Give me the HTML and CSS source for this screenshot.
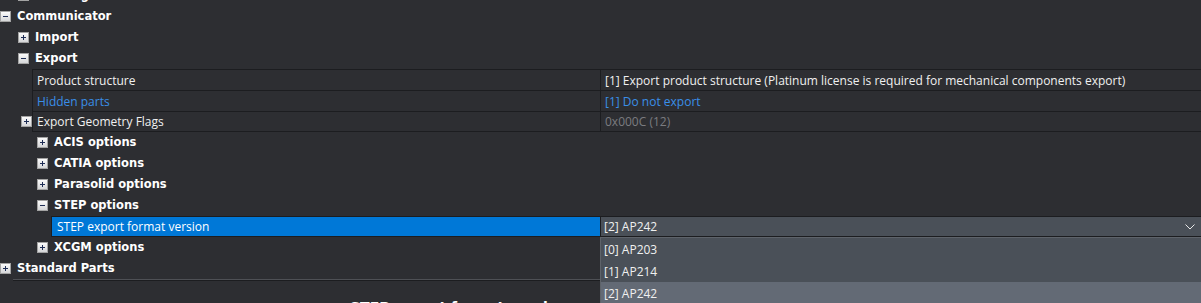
FILE: index.html
```html
<!DOCTYPE html>
<html>
<head>
<meta charset="utf-8">
<link rel="stylesheet" href="styles.css">
</head>
<body>
<div class="pane">
  <div class="tree">
    <div class="cat l1"><span class="exp"><svg viewBox="0 0 9 9" width="9" height="9"><path d="M2 4.5h5M4.5 2v5" class="sym"/></svg></span><span class="cat-label">Drawing</span></div>
    <div class="cat l0"><span class="exp"><svg viewBox="0 0 9 9" width="9" height="9"><path d="M2 4.5h5" class="sym"/></svg></span><span class="cat-label">Communicator</span></div>
    <div class="cat l1"><span class="exp"><svg viewBox="0 0 9 9" width="9" height="9"><path d="M2 4.5h5M4.5 2v5" class="sym"/></svg></span><span class="cat-label">Import</span></div>
    <div class="cat l1"><span class="exp"><svg viewBox="0 0 9 9" width="9" height="9"><path d="M2 4.5h5" class="sym"/></svg></span><span class="cat-label">Export</span></div>

    <div class="prow">
      <div class="gutter g32"></div>
      <div class="cells">
        <div class="pname">Product structure</div>
        <div class="pval">[1] Export product structure (Platinum license is required for mechanical components export)</div>
      </div>
    </div>
    <div class="prow">
      <div class="gutter g32"></div>
      <div class="cells">
        <div class="pname link">Hidden parts</div>
        <div class="pval link">[1] Do not export</div>
      </div>
    </div>
    <div class="prow">
      <div class="gutter g32"><span class="exp"><svg viewBox="0 0 9 9" width="9" height="9"><path d="M2 4.5h5M4.5 2v5" class="sym"/></svg></span></div>
      <div class="cells last">
        <div class="pname">Export Geometry Flags</div>
        <div class="pval dim">0x000C (12)</div>
      </div>
    </div>

    <div class="cat l2"><span class="exp"><svg viewBox="0 0 9 9" width="9" height="9"><path d="M2 4.5h5M4.5 2v5" class="sym"/></svg></span><span class="cat-label">ACIS options</span></div>
    <div class="cat l2"><span class="exp"><svg viewBox="0 0 9 9" width="9" height="9"><path d="M2 4.5h5M4.5 2v5" class="sym"/></svg></span><span class="cat-label">CATIA options</span></div>
    <div class="cat l2"><span class="exp"><svg viewBox="0 0 9 9" width="9" height="9"><path d="M2 4.5h5M4.5 2v5" class="sym"/></svg></span><span class="cat-label">Parasolid options</span></div>
    <div class="cat l2"><span class="exp"><svg viewBox="0 0 9 9" width="9" height="9"><path d="M2 4.5h5" class="sym"/></svg></span><span class="cat-label">STEP options</span></div>

    <div class="prow">
      <div class="gutter g51"></div>
      <div class="cells last">
        <div class="pname sel">STEP export format version</div>
        <div class="pval combo">
          <span class="combo-text">[2] AP242</span>
          <svg class="chev" viewBox="0 0 10 6" width="10" height="6"><path d="M0.5 0.5L5 5L9.5 0.5" fill="none" stroke="#e8e8e8" stroke-width="1"/></svg>
          <div class="dropdown">
            <div class="opt">[0] AP203</div>
            <div class="opt">[1] AP214</div>
            <div class="opt cur">[2] AP242</div>
          </div>
        </div>
      </div>
    </div>

    <div class="cat l2"><span class="exp"><svg viewBox="0 0 9 9" width="9" height="9"><path d="M2 4.5h5M4.5 2v5" class="sym"/></svg></span><span class="cat-label">XCGM options</span></div>
    <div class="cat l0"><span class="exp"><svg viewBox="0 0 9 9" width="9" height="9"><path d="M2 4.5h5M4.5 2v5" class="sym"/></svg></span><span class="cat-label">Standard Parts</span></div>
  </div>
  <div class="tree-end"></div>
  <div class="desc">STEP export format version</div>
</div>
</body>
</html>
```

FILE: styles.css
```css
html, body {
  margin: 0;
  padding: 0;
  background: #2d2e32;
  height: 303px;
  overflow: hidden;
}

.pane {
  width: 1201px;
  height: 303px;
  overflow: hidden;
  font-family: "Open Sans", "Noto Sans", sans-serif;
  font-size: 12px;
  color: #f0f0f0;
}

.tree {
  margin-top: -15px;
}

.cat {
  height: 21px;
  display: flex;
  align-items: center;
  font-family: "DejaVu Sans", sans-serif;
  font-weight: bold;
  font-size: 11.5px;
  color: #ffffff;
}

.cat.l0 { padding-left: 0; }
.cat.l1 { padding-left: 18px; }
.cat.l2 { padding-left: 37px; }

.exp {
  box-sizing: border-box;
  width: 11px;
  height: 11px;
  border: 1px solid #a3a3a3;
  background: linear-gradient(#fbfbfb, #d5d6d8);
  display: flex;
  flex: none;
}

.exp svg { display: block; }

.sym {
  stroke: #1e2d55;
  stroke-width: 1;
  fill: none;
  shape-rendering: crispEdges;
}

.cat-label {
  margin-left: 6px;
  line-height: 21px;
}

.prow {
  display: flex;
  height: 21px;
}

.gutter {
  flex: none;
  display: flex;
  align-items: center;
  box-sizing: border-box;
}

.g32 { width: 32px; padding-left: 21px; }
.g51 { width: 51px; }

.cells {
  flex: 1;
  display: flex;
  box-sizing: border-box;
  border-top: 1px solid #1c1d20;
  border-left: 1px solid #1c1d20;
}

.cells.last {
  border-bottom: 1px solid #1c1d20;
}

.pname {
  flex: 1;
  box-sizing: border-box;
  padding-left: 4px;
  display: flex;
  align-items: center;
  white-space: nowrap;
}

.pval {
  width: 601px;
  flex: none;
  box-sizing: border-box;
  border-left: 1px solid #1c1d20;
  padding-left: 4px;
  display: flex;
  align-items: center;
  white-space: nowrap;
}

.link { color: #3a8ee8; }
.dim { color: #7b7c80; }

.pname.sel {
  background: #0078d7;
  color: #ffffff;
  padding-left: 5px;
}

.combo {
  position: relative;
  background: #4a5058;
  padding-left: 3px;
  padding-right: 6px;
  justify-content: space-between;
}

.chev { display: block; }

.dropdown {
  position: absolute;
  left: -1px;
  right: 0;
  top: calc(100% + 1px);
  z-index: 5;
  background: #4a5058;
  border-top: 1px solid #5e636a;
  border-left: 1px solid #5e636a;
}

.opt {
  height: 22px;
  display: flex;
  align-items: center;
  padding-left: 3px;
  color: #f0f0f0;
}

.opt.cur { background: #636a75; }

.tree-end {
  margin-left: 13px;
  border-top: 1px solid #4e5055;
  border-bottom: 1px solid #1c1d20;
}

.desc {
  margin-top: 18px;
  padding-left: 350px;
  font-family: "DejaVu Sans", sans-serif;
  font-weight: bold;
  font-size: 14px;
  line-height: 17px;
  color: #ffffff;
}
```
